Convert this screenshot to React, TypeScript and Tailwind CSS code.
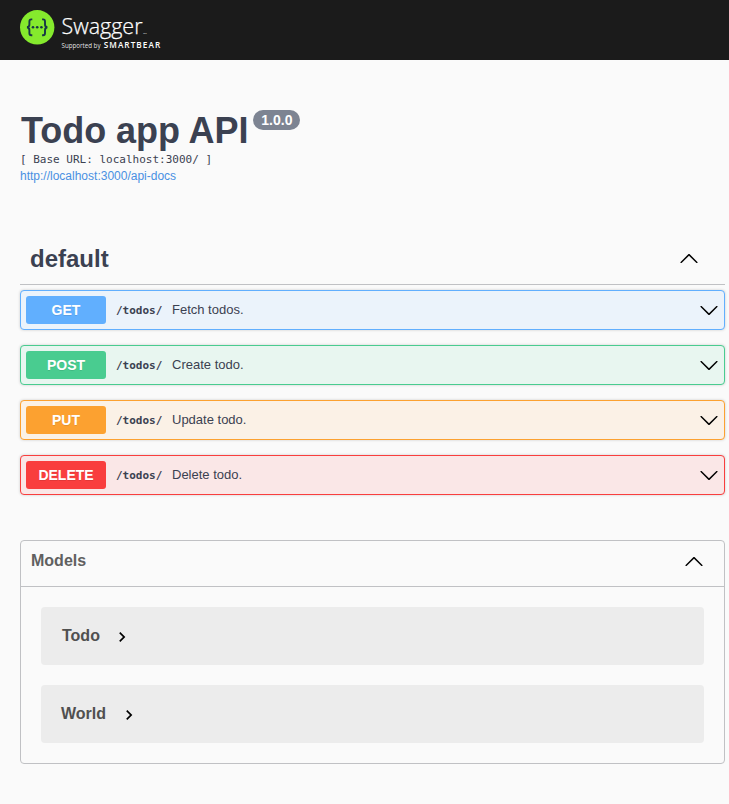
import React from "react";

const sans = "font-['Liberation_Sans',Arial,sans-serif]";
const mono = "font-['DejaVu_Sans_Mono',monospace]";

function Chevron({ up = false }: { up?: boolean }) {
  return (
    <svg width="20" height="20" viewBox="0 0 20 20" className="shrink-0" fill="#000">
      {up ? (
        <path d="M17.418 14.908c.272.268.709.268.979 0s.271-.701 0-.969l-7.908-7.83c-.27-.268-.707-.268-.979 0l-7.908 7.83c-.27.268-.27.701 0 .969.271.268.709.268.979 0L10 7.767l7.418 7.141z" />
      ) : (
        <path d="M17.418 6.109c.272-.268.709-.268.979 0s.271.701 0 .969l-7.908 7.83c-.27.268-.707.268-.979 0l-7.908-7.83c-.27-.268-.27-.701 0-.969.271-.268.709-.268.979 0L10 13.25l7.418-7.141z" />
      )}
    </svg>
  );
}

function Logo() {
  return (
    <svg width="150" height="50" viewBox="0 0 150 50" className="block">
      <circle cx="17.2" cy="22.3" r="17.2" fill="#85ea2d" />
      <g fill="none" stroke="#173647" strokeWidth="1.9">
        <path d="M12.3 14.4h-1c-1.4 0-1.9.7-1.9 2v3c0 1.7-.7 2.6-2.3 2.9 1.6.3 2.3 1.2 2.3 2.9v3c0 1.300.5 2 1.900 2h1" />
        <path d="M22.1 14.4h1c1.4 0 1.9.7 1.9 2v3c0 1.7.7 2.6 2.3 2.9-1.6.3-2.3 1.2-2.3 2.9v3c0 1.300-.5 2-1.900 2h-1" />
      </g>
      <g fill="#173647">
        <circle cx="13" cy="22.3" r="1.3" />
        <circle cx="17.2" cy="22.3" r="1.3" />
        <circle cx="21.4" cy="22.3" r="1.3" />
      </g>
      <g fill="#fff" fontFamily="'Open Sans', sans-serif">
        <text x="41.5" y="29.4" fontSize="22" fontWeight="300" stroke="#fff" strokeWidth="0.25" textLength="81" lengthAdjust="spacingAndGlyphs">Swagger</text>
        <text x="123.200" y="29.4" fontSize="2.5">TM</text>
        <text x="41.5" y="43.300" fontSize="6.5" fillOpacity="0.9" textLength="39" lengthAdjust="spacingAndGlyphs">Supported by</text>
        <text x="83.7" y="43" fontSize="8.2" fontWeight="600" textLength="56.500" lengthAdjust="spacing">SMARTBEAR</text>
      </g>
    </svg>
  );
}

const operations = [
  { method: "GET", text: "Fetch todos.", row: "border-[#61affe] bg-[#ebf3fb]", badge: "bg-[#61affe]" },
  { method: "POST", text: "Create todo.", row: "border-[#49cc90] bg-[#e8f6f0]", badge: "bg-[#49cc90]" },
  { method: "PUT", text: "Update todo.", row: "border-[#fca130] bg-[#fbf1e6]", badge: "bg-[#fca130]" },
  { method: "DELETE", text: "Delete todo.", row: "border-[#f93e3e] bg-[#fae7e7]", badge: "bg-[#f93e3e]" },
];

const models = [
  { name: "Todo", pad: "pl-[21px]", gap: "ml-3" },
  { name: "World", pad: "pl-5", gap: "ml-[13px]" },
];

export default function App() {
  return (
    <div className={`min-h-[804px] bg-[#fafafa] text-[#3b4151] ${sans}`}>
      <header className="h-[60px] bg-[#1b1b1b] pl-5 pt-[5px]">
        <Logo />
      </header>
      <main className="pl-5 pr-1">
        <section className="h-[179px] pt-[49px]">
          <h1 className="flex h-[43px] items-start pl-px text-[36px] font-bold leading-[43px]">
            <span className="whitespace-nowrap tracking-[-0.05px]">Todo app API</span>
            <span className="ml-[5px] mt-px flex h-5 w-[47px] items-center justify-center rounded-full bg-[#7d8492] text-sm leading-none text-white">
              1.0.0
            </span>
          </h1>
          <div className={`h-[15px] whitespace-pre text-[11px] leading-[15px] ${mono}`}>[ Base URL: localhost:3000/ ]</div>
          <a className="block text-xs leading-[18px] text-[#4990e2]">http://localhost:3000/api-docs</a>
        </section>

        <section>
          <div className="flex h-[46px] items-center justify-between border-b border-[#c0c1c4] pb-[5px] pl-[10px] pr-[26px]">
            <h2 className="text-2xl font-bold leading-none">default</h2>
            <span className="pb-[3px]">
              <Chevron up />
            </span>
          </div>
          <div className="mt-[5px] flex flex-col gap-[15px]">
            {operations.map((o) => (
              <div
                key={o.method}
                className={`flex h-10 items-center rounded border pl-[5px] pr-[5px] shadow-[0_0_3px_rgba(0,0,0,0.19)] ${o.row}`}
              >
                <span
                  className={`h-7 w-20 rounded-[3px] text-center text-sm font-bold leading-7 text-white [text-shadow:0_1px_0_rgba(0,0,0,0.1)] ${o.badge}`}
                >
                  {o.method}
                </span>
                <span className={`w-[66px] pl-[10px] text-[11px] font-bold leading-none ${mono}`}>/todos/</span>
                <span className="flex-1 pb-px text-[13px] leading-none">{o.text}</span>
                <Chevron />
              </div>
            ))}
          </div>
        </section>

        <section className="mt-[45px] h-[224px] rounded border border-[#c0c1c4]">
          <div className="flex h-[46px] items-center justify-between border-b border-[#c0c1c4] pl-[10px] pr-5 text-[#606060]">
            <h3 className="pb-[5px] text-base font-bold leading-none">Models</h3>
            <span className="pb-[5px]">
              <Chevron up />
            </span>
          </div>
          <div className="flex flex-col gap-5 p-5">
            {models.map((m) => (
              <div key={m.name} className={`flex h-[58px] items-center rounded bg-[#ececec] text-[#505050] ${m.pad}`}>
                <span className="text-base font-bold leading-none">{m.name}</span>
                <svg width="20" height="20" viewBox="0 0 24 24" className={`mt-[2px] ${m.gap}`} fill="#000">
                  <path d="M10 6L8.59 7.41 13.17 12l-4.58 4.59L10 18l6-6z" />
                </svg>
              </div>
            ))}
          </div>
        </section>
      </main>
    </div>
  );
}
